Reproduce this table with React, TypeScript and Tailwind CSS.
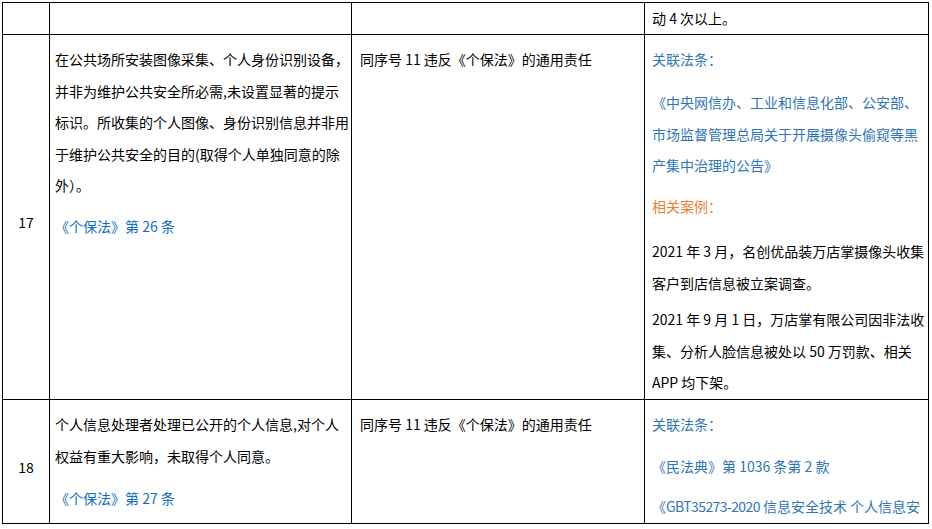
import React from 'react';

// ----------------------------
// Paragraph helper: explicit lines, joined with <br/>
// ----------------------------
const Para = ({ lines, className = '' }: { lines: React.ReactNode[]; className?: string }) => (
    <p className={`whitespace-nowrap ${className}`}>
        {lines.map((line, i) => (
            <React.Fragment key={i}>
                {i > 0 && <br />}
                {line}
            </React.Fragment>
        ))}
    </p>
);

const cellBase = "bg-white overflow-hidden font-['Noto_Sans_CJK_SC',sans-serif] text-[14px] text-black";

const NumberCell = ({ n, pad }: { n: string; pad: string }) => (
    <div className={`${cellBase} flex items-center justify-center ${pad}`}>
        <span className="leading-none">{n}</span>
    </div>
);

const BLUE = 'text-[#2e75b6]';
const LINK = 'text-[#0a6fc2]';
const ORANGE = 'text-[#ed7d31]';

export default function App() {
    return (
        <div className="min-h-screen bg-white pt-[2px] pl-[2px]">
            <div className="grid w-[927px] h-[522px] grid-cols-[46px_301px_292px_283px] grid-rows-[31px_364px_123px] gap-px p-px bg-black">
                {/* ---------- previous row (cut off) ---------- */}
                <div className={cellBase} />
                <div className={cellBase} />
                <div className={cellBase} />
                <div className={`${cellBase} pl-[7px] leading-[31px]`}>
                    <Para lines={['动 4 次以上。']} />
                </div>

                {/* ---------- row 17 ---------- */}
                <NumberCell n="17" pad="pt-[9px]" />
                <div className={`${cellBase} pl-[5px] pt-[9px] leading-[31.5px]`}>
                    <Para
                        lines={[
                            '在公共场所安装图像采集、个人身份识别设备，',
                            '并非为维护公共安全所必需,未设置显著的提示',
                            '标识。所收集的个人图像、身份识别信息并非用',
                            '于维护公共安全的目的(取得个人单独同意的除',
                            '外）。',
                        ]}
                    />
                    <Para lines={['《个保法》第 26 条']} className={`mt-[9.5px] ${LINK}`} />
                </div>
                <div className={`${cellBase} pl-[8px] pt-[9px] leading-[31.5px]`}>
                    <Para lines={['同序号 11 违反《个保法》的通用责任']} />
                </div>
                <div className={`${cellBase} pl-[7px] pt-[9px] leading-[31.5px]`}>
                    <Para lines={['关联法条：']} className={BLUE} />
                    <Para
                        lines={[
                            '《中央网信办、工业和信息化部、公安部、',
                            '市场监督管理总局关于开展摄像头偷窥等黑',
                            '产集中治理的公告》',
                        ]}
                        className={`mt-[11.5px] ${BLUE}`}
                    />
                    <Para lines={['相关案例：']} className={`mt-[9.5px] ${ORANGE}`} />
                    <Para
                        lines={['2021 年 3 月，名创优品装万店掌摄像头收集', '客户到店信息被立案调查。']}
                        className="mt-[13.5px]"
                    />
                    <Para
                        lines={[
                            '2021 年 9 月 1 日，万店掌有限公司因非法收',
                            '集、分析人脸信息被处以 50 万罚款、相关',
                            'APP 均下架。',
                        ]}
                        className="mt-[5px]"
                    />
                </div>

                {/* ---------- row 18 ---------- */}
                <NumberCell n="18" pad="pt-[10px]" />
                <div className={`${cellBase} pl-[5px] pt-[8px] leading-[32px]`}>
                    <Para
                        lines={[
                            '个人信息处理者处理已公开的个人信息,对个人',
                            '权益有重大影响，未取得个人同意。',
                        ]}
                    />
                    <Para lines={['《个保法》第 27 条']} className={`mt-[10px] ${LINK}`} />
                </div>
                <div className={`${cellBase} pl-[8px] pt-[9px] leading-[31.5px]`}>
                    <Para lines={['同序号 11 违反《个保法》的通用责任']} />
                </div>
                <div className={`${cellBase} pl-[7px] pt-[9px] leading-[31.5px]`}>
                    <Para lines={['关联法条：']} className={BLUE} />
                    <Para lines={['《民法典》第 1036 条第 2 款']} className={`mt-[10px] ${BLUE}`} />
                    <Para
                        lines={[
                            <>
                                《<span className="tracking-[-0.6px]">GBT35273-2020</span> 信息安全技术 个人信息安
                            </>,
                        ]}
                        className={`mt-[9px] ${BLUE}`}
                    />
                </div>
            </div>
        </div>
    );
}
